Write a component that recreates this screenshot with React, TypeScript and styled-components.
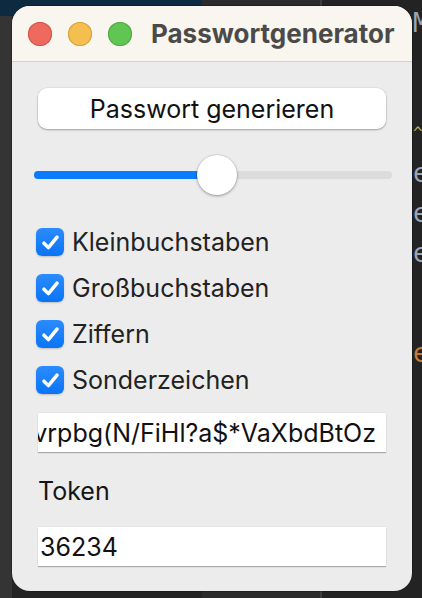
import styled, { createGlobalStyle } from "styled-components";

const GlobalStyle = createGlobalStyle`
  html, body {
    margin: 0;
    padding: 0;
    background: #262626;
  }
  body {
    font-family: Inter, "Noto Sans", "Liberation Sans", sans-serif;
    -webkit-font-smoothing: antialiased;
  }
`;

const options = ["Kleinbuchstaben", "Großbuchstaben", "Ziffern", "Sonderzeichen"];

const gutterLines = [
  { text: "", color: "#9aa6b5" },
  { text: "^", color: "#b8a75a", small: true },
  { text: "", color: "#9aa6b5" },
  { text: "e", color: "#9aa6b5" },
  { text: "", color: "#9aa6b5" },
  { text: "e", color: "#9aa6b5" },
  { text: "", color: "#9aa6b5" },
  { text: "e", color: "#9aa6b5" },
  { text: "", color: "#9aa6b5" },
  { text: "", color: "#9aa6b5" },
  { text: "", color: "#9aa6b5" },
  { text: "", color: "#9aa6b5" },
  { text: "e", color: "#c97a35" },
];

export default function App() {
  const length = 51;

  return (
    <>
      <GlobalStyle />
      <Desktop>
        <LeftStrip />
        <Window>
          <TitleBar>
            <Lights>
              <Light color="#ee6a5f" ring="#d25447" />
              <Light color="#f5bf4f" ring="#d6a03b" />
              <Light color="#61c554" ring="#4ea840" />
            </Lights>
            <Title>Passwortgenerator</Title>
          </TitleBar>
          <Content>
            <PushButton>Passwort generieren</PushButton>
            <Slider>
              <Track>
                <Fill style={{ width: `${length}%` }} />
              </Track>
              <Thumb style={{ left: `${length}%` }} />
            </Slider>
            <Options>
              {options.map((o) => (
                <OptionRow key={o}>
                  <CheckBox>
                    <svg width="18" height="18" viewBox="0 0 18 18">
                      <path
                        d="M3.4 9.6 L7.2 13.4 L14.6 4.4"
                        fill="none"
                        stroke="#fff"
                        strokeWidth="3"
                        strokeLinecap="round"
                        strokeLinejoin="round"
                      />
                    </svg>
                  </CheckBox>
                  <OptionLabel>{o}</OptionLabel>
                </OptionRow>
              ))}
            </Options>
            <Field scrolled>
              <FieldText>Dvrpbg(N/FiHl?a$*VaXbdBtOz</FieldText>
            </Field>
            <FieldLabel>Token</FieldLabel>
            <Field>
              <FieldText>36234</FieldText>
            </Field>
          </Content>
        </Window>
        <Gutter>
          <GutterTop>M</GutterTop>
          {gutterLines.map((l, i) => (
            <GutterLine key={i} color={l.color} $small={l.small}>
              {l.text}
            </GutterLine>
          ))}
        </Gutter>
      </Desktop>
    </>
  );
}

const Desktop = styled.div`
  width: 422px;
  height: 598px;
  display: flex;
  overflow: hidden;
  background:
    linear-gradient(#0d2a40, #0d2a40) 0 0 / 202px 16px no-repeat,
    linear-gradient(#2b2b2b, #2b2b2b) 202px 0 / 118px 100% no-repeat,
    linear-gradient(#3d3d3d, #3d3d3d) 320px 0 / 2px 100% no-repeat,
    #232323;
`;

const LeftStrip = styled.div`
  width: 12px;
  flex-shrink: 0;
  background: linear-gradient(#0d2a40 0 16px, #343434 16px);
`;

const Window = styled.div`
  width: 400px;
  height: 585px;
  margin-top: 6px;
  flex-shrink: 0;
  border-radius: 18px;
  overflow: hidden;
  background: #ececec;
  display: flex;
  flex-direction: column;
  box-shadow: 0 0 0 0.5px rgba(0, 0, 0, 0.5);
`;

const TitleBar = styled.div`
  height: 56px;
  background: #f9f6f0;
  border-bottom: 1px solid #d3d0ca;
  display: flex;
  align-items: center;
  padding-left: 16px;
  gap: 19px;
  box-sizing: border-box;
`;

const Lights = styled.div`
  display: flex;
  gap: 16px;
`;

const Light = styled.span<{ color: string; ring: string }>`
  width: 24px;
  height: 24px;
  border-radius: 50%;
  background: ${(p) => p.color};
  box-shadow: inset 0 0 0 1px ${(p) => p.ring};
`;

const Title = styled.span`
  font-size: 26px;
  font-weight: 700;
  color: #4b4a48;
  white-space: nowrap;
`;

const Content = styled.div`
  display: flex;
  flex-direction: column;
  padding: 26px 26px 0 26px;
`;

const PushButton = styled.button`
  height: 41px;
  border: none;
  border-radius: 9px;
  background: #fff;
  box-shadow: 0 1px 2px rgba(0, 0, 0, 0.3), 0 0 0 0.5px rgba(0, 0, 0, 0.08);
  font-family: inherit;
  font-size: 25px;
  color: #111;
  padding: 0;
`;

const Slider = styled.div`
  position: relative;
  height: 40px;
  margin: 26px -6px 0 -4px;
  display: flex;
  align-items: center;
`;

const Track = styled.div`
  flex: 1;
  height: 8px;
  border-radius: 4px;
  background: #dcdcdc;
  overflow: hidden;
`;

const Fill = styled.div`
  height: 100%;
  background: #0a7aff;
`;

const Thumb = styled.div`
  position: absolute;
  top: 0;
  width: 40px;
  height: 40px;
  margin-left: -20px;
  border-radius: 50%;
  background: #fff;
  box-shadow: 0 1px 3px rgba(0, 0, 0, 0.35), 0 0 0 0.5px rgba(0, 0, 0, 0.12);
`;

const Options = styled.div`
  display: flex;
  flex-direction: column;
  gap: 18px;
  margin: 33px 0 0 -2px;
`;

const OptionRow = styled.label`
  display: flex;
  align-items: center;
  gap: 8px;
  height: 28px;
`;

const CheckBox = styled.span`
  width: 28px;
  height: 28px;
  border-radius: 6px;
  background: linear-gradient(#2b8cff, #0a74f5);
  box-shadow: 0 1px 2px rgba(0, 0, 0, 0.2);
  display: flex;
  align-items: center;
  justify-content: center;
  svg {
    width: 21px;
    height: 21px;
  }
`;

const OptionLabel = styled.span`
  font-size: 25px;
  color: #222;
  white-space: nowrap;
`;

const Field = styled.div<{ scrolled?: boolean }>`
  height: 39px;
  margin-top: 19px;
  background: #fff;
  box-shadow: 0 1px 1px rgba(0, 0, 0, 0.28), 0 -0.5px 0 rgba(0, 0, 0, 0.06);
  display: flex;
  align-items: center;
  justify-content: ${(p) => (p.scrolled ? "flex-end" : "flex-start")};
  padding: ${(p) => (p.scrolled ? "0 10px 0 0" : "0 0 0 2px")};
  overflow: hidden;
`;

const FieldText = styled.span`
  font-size: 25px;
  color: #111;
  white-space: nowrap;
`;

const FieldLabel = styled.div`
  margin-top: 23px;
  height: 32px;
  line-height: 32px;
  font-size: 25px;
  color: #151515;
  & + ${Field} {
    margin-top: 20px;
  }
`;

const Gutter = styled.div`
  flex: 1;
  overflow: hidden;
  display: flex;
  flex-direction: column;
  font-family: "DejaVu Sans Mono", monospace;
  font-size: 26px;
  padding-left: 1px;
`;

const GutterTop = styled.div`
  height: 43px;
  line-height: 46px;
  color: #9aa6b5;
  margin-bottom: 60px;
`;

const GutterLine = styled.div<{ color: string; $small?: boolean }>`
  height: 20px;
  line-height: 20px;
  color: ${(p) => p.color};
  font-size: ${(p) => (p.$small ? "16px" : "26px")};
`;
